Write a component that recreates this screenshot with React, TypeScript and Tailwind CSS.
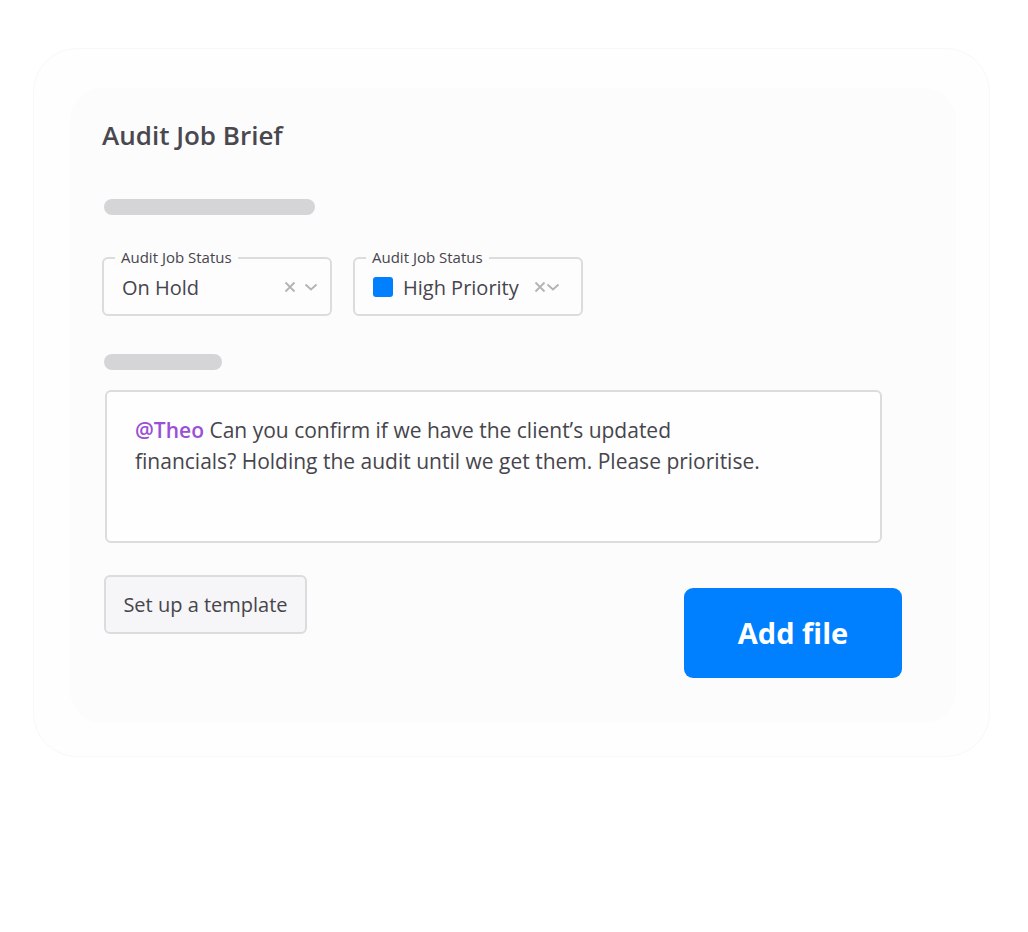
import React from 'react';

function StatusSelect({ label, value, color, tight }: { label: string; value: string; color?: string; tight?: boolean }) {
  return (
    <div
      className={`relative w-[230px] h-[59px] rounded-[6px] border-2 border-[#dcdbde] bg-[#fdfdfe] flex items-center pl-[18px] ${
        tight ? 'pr-[21px]' : 'pr-[12px]'
      }`}
    >
      <span className="absolute -top-[12px] left-[11px] bg-[#fcfcfd] px-[6px] text-[15px] leading-[20px] text-[#47454c]">
        {label}
      </span>
      {color && <span className="w-[20px] h-[20px] rounded-[3px] mr-[10px]" style={{ backgroundColor: color }} />}
      <span className="pt-[2px] text-[20px] text-[#47454c]">{value}</span>
      <span className={`ml-auto flex items-center text-[#b3b2b6] ${tight ? 'gap-0' : 'gap-[8px]'}`}>
        <svg width="12" height="12" viewBox="0 0 12 12" fill="none" stroke="currentColor" strokeWidth="1.8">
          <path d="M1.5 1.5l9 9M10.5 1.5l-9 9" />
        </svg>
        <svg width="14" height="10" viewBox="0 0 14 10" fill="none" stroke="currentColor" strokeWidth="1.8">
          <path d="M1.5 2.5l5.5 5 5.5-5" />
        </svg>
      </span>
    </div>
  );
}

export default function App() {
  return (
    <div className="min-h-[932px] w-full bg-white pt-[48px] pl-[33px]" style={{ fontFamily: '"Open Sans", "Noto Sans", sans-serif' }}>
      <div className="w-[957px] h-[709px] rounded-[44px] border border-[#f8f8f9] bg-[#fefefe] pt-[39px] pl-[36px]">
        <div className="w-[886px] h-[635px] rounded-[32px] bg-[#fcfcfd] pt-[29px] pl-[32px]">
          <h1 className="text-[26px] leading-[36px] font-semibold text-[#4a484f]">Audit Job Brief</h1>

          <div className="mt-[46px] ml-[2px] w-[211px] h-[16px] rounded-full bg-[#d5d4d7]" />

          <div className="mt-[42px] flex gap-[21px]">
            <StatusSelect label="Audit Job Status" value="On Hold" />
            <StatusSelect label="Audit Job Status" value="High Priority" color="#007fff" tight />
          </div>

          <div className="mt-[38px] ml-[2px] w-[118px] h-[16px] rounded-full bg-[#d5d4d7]" />

          <div className="mt-[20px] ml-[3px] w-[777px] h-[153px] rounded-[6px] border-2 border-[#dcdbde] bg-[#fefefe] pt-[23px] pl-[28px] text-[21px] leading-[31px] text-[#47454c]">
            <span className="font-semibold text-[#9b4fd6]">@Theo</span> Can you confirm if we have the client’s updated
            <br />
            financials? Holding the audit until we get them. Please prioritise.
          </div>

          <div className="mt-[32px] ml-[2px] w-[798px] flex items-start justify-between">
            <button className="h-[59px] w-[203px] rounded-[6px] border-2 border-[#dcdbde] bg-[#f6f5f7] text-[20px] text-[#47454c]">
              Set up a template
            </button>
            <button className="mt-[13px] w-[218px] h-[90px] rounded-[9px] bg-[#007fff] text-[29px] font-bold text-white">
              Add file
            </button>
          </div>
        </div>
      </div>
    </div>
  );
}
